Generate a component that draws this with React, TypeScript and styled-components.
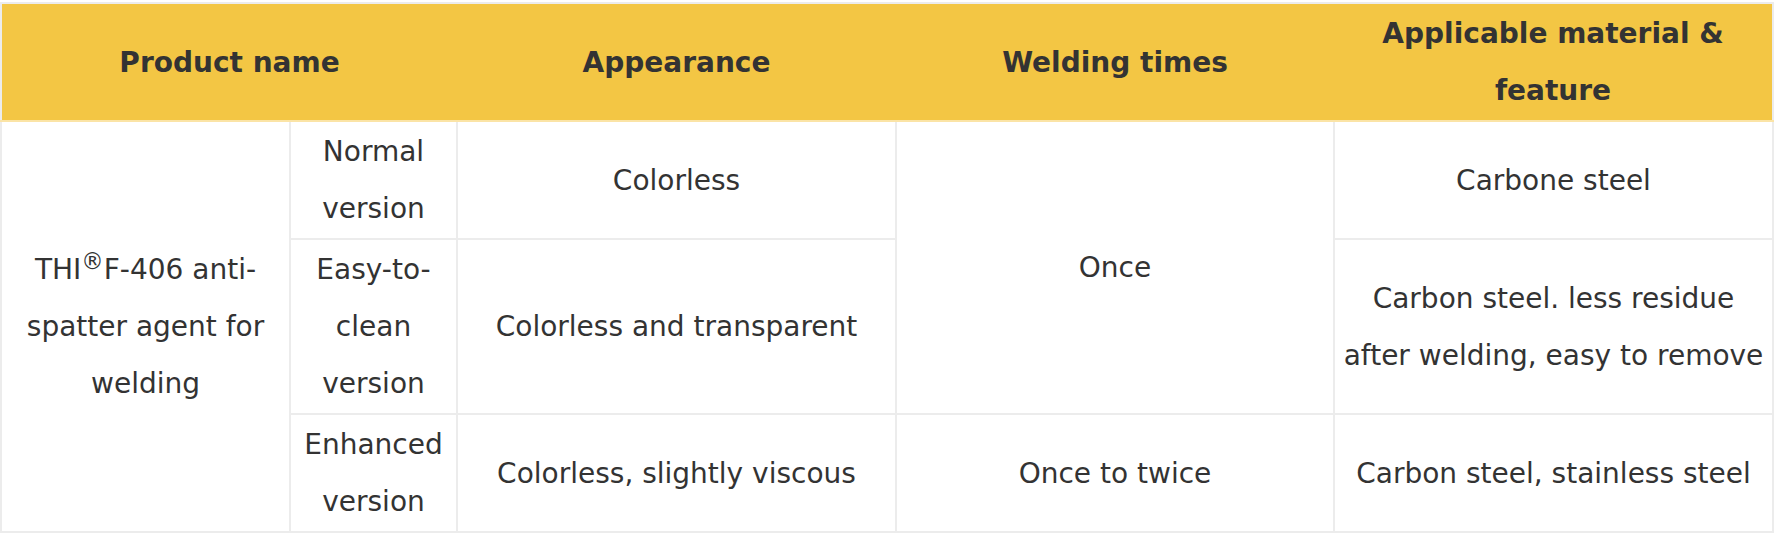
import styled, { createGlobalStyle } from "styled-components";

const GlobalStyle = createGlobalStyle`
  html, body {
    margin: 0;
    padding: 0;
    background: #ffffff;
  }
  body {
    font-family: "DejaVu Sans", Verdana, sans-serif;
    color: #333333;
  }
`;

const Wrap = styled.div`
  width: 1774px;
  padding-top: 2px;
`;

const Table = styled.table`
  width: 1774px;
  table-layout: fixed;
  border-collapse: collapse;
  border: 2px solid #ececec;
  font-size: 28px;
  line-height: 57px;
  color: #333333;
`;

const HeadRow = styled.tr`
  background: #f3c644;
`;

const HeadCell = styled.th<{ $first?: boolean; $last?: boolean }>`
  padding: 1px 6px;
  font-weight: 700;
  text-align: center;
  vertical-align: middle;
  border-top: none;
  border-bottom: 2px solid #fbe4a6;
  border-left: ${({ $first }) => ($first ? "2px solid #ececec" : "none")};
  border-right: ${({ $last }) => ($last ? "2px solid #ececec" : "none")};
`;

const Cell = styled.td`
  padding: 1px 6px;
  text-align: center;
  vertical-align: middle;
  border: 2px solid #ececec;
  font-weight: 400;
`;

const Sup = styled.sup`
  font-size: 0.8em;
  line-height: 0;
  vertical-align: 0.45em;
`;

const widths = [289, 167, 439, 438, 439];

export default function App() {
  return (
    <Wrap>
      <GlobalStyle />
      <Table>
        <colgroup>
          {widths.map((w, i) => (
            <col key={i} style={{ width: w }} />
          ))}
        </colgroup>
        <thead>
          <HeadRow>
            <HeadCell $first colSpan={2}>
              Product name
            </HeadCell>
            <HeadCell>Appearance</HeadCell>
            <HeadCell>Welding times</HeadCell>
            <HeadCell $last>Applicable material &amp; feature</HeadCell>
          </HeadRow>
        </thead>
        <tbody>
          <tr>
            <Cell rowSpan={3}>
              THI<Sup>®</Sup>F-406 anti-spatter agent for welding
            </Cell>
            <Cell>Normal version</Cell>
            <Cell>Colorless</Cell>
            <Cell rowSpan={2}>Once</Cell>
            <Cell>Carbone steel</Cell>
          </tr>
          <tr>
            <Cell>Easy-to-clean version</Cell>
            <Cell>Colorless and transparent</Cell>
            <Cell>Carbon steel. less residue after welding, easy to remove</Cell>
          </tr>
          <tr>
            <Cell>Enhanced version</Cell>
            <Cell>Colorless, slightly viscous</Cell>
            <Cell>Once to twice</Cell>
            <Cell>Carbon steel, stainless steel</Cell>
          </tr>
        </tbody>
      </Table>
    </Wrap>
  );
}
